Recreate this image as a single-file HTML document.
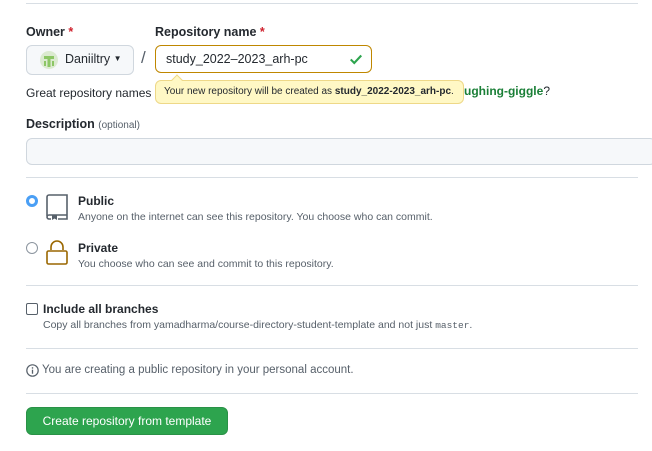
<!DOCTYPE html>
<html><head><style>
*{box-sizing:border-box;margin:0;padding:0}
body{width:652px;height:451px;background:#fff;font-family:"Liberation Sans",sans-serif;color:#24292f;position:relative;overflow:hidden}
.a{position:absolute;white-space:nowrap}
.hr{position:absolute;left:26px;width:612px;height:1px;background:#d8dee4}
.lbl{font-size:12.5px;font-weight:bold}
.req{color:#cf222e}
.small{font-size:10.5px;color:#57606a}
</style></head><body>
<div class="hr" style="top:3px"></div>
<div class="a lbl" style="left:26px;top:25px">Owner <span class="req">*</span></div>
<div class="a lbl" style="left:155px;top:25px">Repository name <span class="req">*</span></div>
<div class="a" style="left:26px;top:45px;width:108px;height:30px;border:1px solid #d0d7de;border-radius:6px;background:#f6f8fa"></div>
<svg class="a" style="left:40px;top:51px" width="18" height="18" viewBox="0 0 18 18"><circle cx="9" cy="9" r="9" fill="#dbead0"/><rect x="4" y="5" width="10" height="3" fill="#8cc665"/><rect x="7.5" y="5" width="3" height="11" fill="#8cc665"/><rect x="4" y="10" width="2" height="5" fill="#8cc665"/><rect x="12" y="10" width="2" height="5" fill="#8cc665"/></svg>
<div class="a" style="left:65px;top:52px;font-size:12.5px">Daniiltry <span style="font-size:8px;vertical-align:2px">▼</span></div>
<div class="a" style="left:141px;top:48px;font-size:17px;color:#57606a">/</div>
<div class="a" style="left:155px;top:45px;width:217px;height:28px;border:1px solid #bf8700;border-radius:6px;background:#fff"></div>
<div class="a" style="left:166px;top:52px;font-size:12.5px">study_2022–2023_arh-pc</div>
<svg class="a" style="left:349px;top:52px" width="14" height="14" viewBox="0 0 16 16"><path d="M2 8.5l4 4L14 4" fill="none" stroke="#2da44e" stroke-width="2.4"/></svg>
<div class="a" style="left:26px;top:86px;font-size:12px">Great repository names are short and memorable. Need inspiration? How about <b style="color:#1a7f37">ughing-giggle</b>?</div>
<div class="a" style="left:155px;top:80px;width:309px;height:24px;background:#fff8c5;border:1px solid #eed888;border-radius:6px;font-size:10px;padding:5px 0 0 8px;z-index:2">Your new repository will be created as <b>study_2022-2023_arh-pc</b>.</div>
<div class="a" style="left:173px;top:76px;width:8px;height:8px;background:#fff8c5;border-left:1px solid #eed888;border-top:1px solid #eed888;transform:rotate(45deg);z-index:3"></div>
<div class="a" style="left:300px;top:84px;width:300px;height:18px;background:#fff;z-index:1"></div>
<div class="a" style="left:464px;top:84px;font-size:12px;z-index:1;background:#fff"><b style="color:#1a7f37">ughing-giggle</b>?</div>
<div class="a lbl" style="left:26px;top:117px">Description <span style="font-weight:normal;font-size:10px;color:#57606a">(optional)</span></div>
<div class="a" style="left:26px;top:138px;width:630px;height:27px;border:1px solid #d0d7de;border-radius:6px;background:#f6f8fa"></div>
<div class="hr" style="top:177px"></div>
<div class="a" style="left:26px;top:195px;width:12px;height:12px;border-radius:50%;border:3.5px solid #4a9ff5;background:#fff"></div>
<svg class="a" style="left:45px;top:194px" width="24" height="26" viewBox="0 0 24 26"><path d="M2 22V3a2 2 0 012-2h18v20H4a2 2 0 00-2 2v0a2 2 0 002 2h2M13 25h9v-4" fill="none" stroke="#57606a" stroke-width="1.6"/><path d="M7 21h5v5l-2.5-1.5L7 26z" fill="#57606a"/></svg>
<div class="a lbl" style="left:78px;top:194px;font-size:12px">Public</div>
<div class="a small" style="left:78px;top:211px">Anyone on the internet can see this repository. You choose who can commit.</div>
<div class="a" style="left:26px;top:242px;width:12px;height:12px;border-radius:50%;border:1px solid #8c959f;background:#fff"></div>
<svg class="a" style="left:45px;top:240px" width="24" height="26" viewBox="0 0 24 26"><path d="M6 10V7a6 6 0 0112 0v3" fill="none" stroke="#9a6700" stroke-width="1.6"/><rect x="2" y="11" width="20" height="13" rx="1.5" fill="none" stroke="#9a6700" stroke-width="1.6"/></svg>
<div class="a lbl" style="left:78px;top:241px;font-size:12px">Private</div>
<div class="a small" style="left:78px;top:258px">You choose who can see and commit to this repository.</div>
<div class="hr" style="top:285px"></div>
<div class="a" style="left:26px;top:303px;width:12px;height:12px;border:1px solid #57606a;border-radius:2px"></div>
<div class="a lbl" style="left:43px;top:302px;font-size:12px">Include all branches</div>
<div class="a small" style="left:43px;top:319px">Copy all branches from yamadharma/course-directory-student-template and not just <span style="font-family:'Liberation Mono',monospace;font-size:9.5px">master</span>.</div>
<div class="hr" style="top:348px"></div>
<svg class="a" style="left:26px;top:364px" width="13" height="13" viewBox="0 0 16 16"><circle cx="8" cy="8" r="7" fill="none" stroke="#57606a" stroke-width="1.5"/><rect x="7.2" y="7" width="1.6" height="5" fill="#57606a"/><circle cx="8" cy="4.8" r="1" fill="#57606a"/></svg>
<div class="a" style="left:42px;top:364px;font-size:11.5px;color:#57606a">You are creating a public repository in your personal account.</div>
<div class="hr" style="top:393px"></div>
<div class="a" style="left:26px;top:407px;width:202px;height:28px;background:#2da44e;border:1px solid #2a9147;border-radius:6px;color:#fff;font-size:12px;text-align:center;line-height:26px">Create repository from template</div>
</body></html>
